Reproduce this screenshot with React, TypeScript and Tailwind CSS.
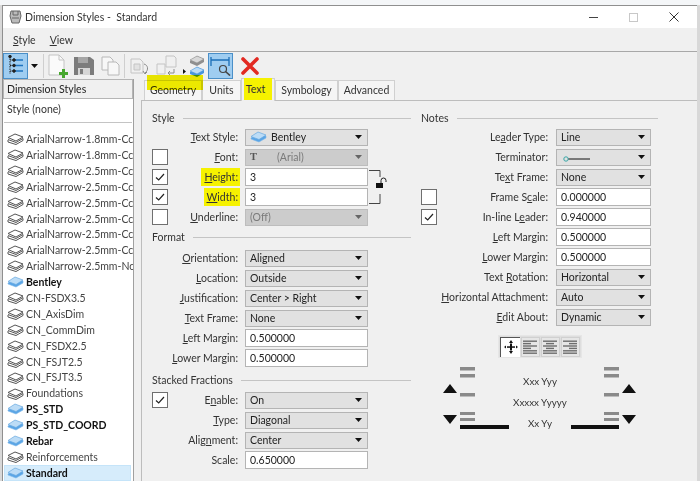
import React from "react";

function Tri({ color = "#111" }: { color?: string }) {
  return (
    <svg width="7" height="4" viewBox="0 0 7 4" className="shrink-0">
      <path d="M0 0h7L3.5 4z" fill={color} />
    </svg>
  );
}

function Lbl({ t, u }: { t: string; u?: number }) {
  if (u === undefined) return <>{t}</>;
  return (
    <>
      {t.slice(0, u)}
      <span className="underline">{t[u]}</span>
      {t.slice(u + 1)}
    </>
  );
}

function Sheet({ blue }: { blue?: boolean }) {
  if (blue) {
    return (
      <svg width="17" height="12" viewBox="0 0 17 12" className="shrink-0">
        <path d="M1 7l7-5 8 3v2l-7 4-8-3z" fill="#5aa5e6" stroke="#7fb8ea" strokeWidth=".6" />
        <path d="M1 5.5L8 1l8 3-7 4.5z" fill="#bcdcf6" stroke="#69a9e0" strokeWidth=".7" />
      </svg>
    );
  }
  return (
    <svg width="17" height="12" viewBox="0 0 17 12" className="shrink-0" fill="#fff" stroke="#555" strokeWidth="1">
      <path d="M1 7v2l8 2.5 7-4V5.5" fill="none" />
      <path d="M1 4.5L8 1l8 3-7 4z" />
      <path d="M1 6.5L9 9.5l7-4" fill="none" />
    </svg>
  );
}

function Check({ on }: { on?: boolean }) {
  return (
    <div className="flex h-4 w-4 shrink-0 items-center justify-center border border-[#6f6f6f] bg-white">
      {on && (
        <svg width="10" height="8" viewBox="0 0 10 8">
          <path d="M1 4.5L3.7 7 9 1" fill="none" stroke="#222" strokeWidth="1.200" />
        </svg>
      )}
    </div>
  );
}

function Combo({ v, off, icon }: { v: React.ReactNode; off?: boolean; icon?: React.ReactNode }) {
  return (
    <div
      className={`flex h-[17px] w-full items-center border pl-[4px] pr-[5px] ${
        off ? "border-[#bdbdbd] bg-[#cccccc] text-[#7a7a7a]" : "border-[#b4b4b4] bg-[#e1e1e1] text-[#222]"
      }`}
    >
      {icon}
      <div className="min-w-0 flex-1 truncate leading-[15px]">{v}</div>
      <Tri color={off ? "#666" : "#111"} />
    </div>
  );
}

function Edit({ v }: { v: string }) {
  return (
    <div className="flex h-[18px] w-full items-center border border-[#b4b4b4] bg-white pl-[4px] text-[#222]">{v}</div>
  );
}

function Row({
  label,
  u,
  check,
  mark,
  right,
  children,
}: {
  label: string;
  u?: number;
  check?: "on" | "off";
  mark?: boolean;
  right?: boolean;
  children: React.ReactNode;
}) {
  return (
    <div className="flex h-5 items-center">
      <div className="w-4 shrink-0">{check && <Check on={check === "on"} />}</div>
      <div className={`shrink-0 whitespace-nowrap text-right text-[#333] ${right ? "w-[111px]" : "w-[70px]"}`}>
        <span className={mark ? "-mr-[2px] bg-[#f6f200] py-[3px] pl-[3px] pr-[2px]" : ""}>
          <Lbl t={label} u={u} />:
        </span>
      </div>
      <div className={`shrink-0 ${right ? "ml-2 w-[95px]" : "ml-[7px] w-[123px]"}`}>{children}</div>
    </div>
  );
}

function Head({ t, className = "" }: { t: string; className?: string }) {
  return (
    <div className={`flex items-center gap-2 text-[#333] ${className}`}>
      <span className="shrink-0">{t}</span>
      <div className="h-px flex-1 bg-[#c4c4c4]" />
    </div>
  );
}

function AlignBtn({ rows }: { rows: [number, number][] }) {
  return (
    <div className="flex h-[20px] w-[19px] items-center justify-center border border-[#d0d0d0] bg-[#e6e6e6]">
      <svg width="15" height="14" viewBox="0 0 15 14">
        {rows.map(([x, w], i) => (
          <rect key={i} x={x} y={i * 2.4 + .5} width={w} height="1.4" fill="#6d6d6d" />
        ))}
      </svg>
    </div>
  );
}

function Toolbar() {
  return (
    <div className="flex h-[27px] items-center">
      <div className="flex h-[26px] w-[25px] items-center justify-center border border-[#4a8fc8] bg-[#9fcdf1]">
        <svg width="17" height="21" viewBox="0 0 17 21" fill="none" stroke="#222" strokeWidth="1">
          <path d="M3 1v18M3 5h5M3 10.500h5M3 16h5" strokeDasharray="1.500 1" />
          <path d="M8 5h8M8 10.500h8M8 16h8" stroke="#1f74c0" strokeWidth="1.600" />
          <circle cx="3" cy="1.500" r="1.300" fill="#222" />
          <circle cx="7" cy="5" r="1.300" fill="#222" />
          <circle cx="7" cy="10.500" r="1.300" fill="#222" />
          <circle cx="7" cy="16" r="1.300" fill="#222" />
        </svg>
      </div>
      <div className="ml-[3px] w-[9px]">
        <Tri />
      </div>
      <div className="ml-[3px] h-[24px] w-px bg-[#cfcfcf]" />
      <svg width="22" height="24" viewBox="0 0 22 24" className="ml-[3px]">
        <path d="M2 1h10l5 5v15H2z" fill="#fafafa" stroke="#c4c4c4" />
        <path d="M12 1v5h5" fill="none" stroke="#c4c4c4" />
        <path d="M15 15h3v3h3v3h-3v3h-3v-3h-3v-3h3z" fill="#47a72f" />
      </svg>
      <svg width="20" height="20" viewBox="0 0 20 20" className="ml-[5px]">
        <path d="M0 1h16l4 3v15H0z" fill="#7c7c7c" />
        <path d="M4 1h10v6H4z" fill="#a6a6a6" />
        <path d="M4 12h12v7H4z" fill="#d6d6d6" />
        <path d="M6 13h3v5H6z" fill="#7c7c7c" />
      </svg>
      <svg width="20" height="20" viewBox="0 0 20 20" className="ml-[7px]" fill="#f7f7f7" stroke="#b8b8b8">
        <path d="M1 1h8l3 3v10H1z" />
        <path d="M7 6h8l3 3v10H7z" />
      </svg>
      <div className="ml-[3px] h-[24px] w-px bg-[#cfcfcf]" />
      <svg width="21" height="20" viewBox="0 0 21 20" className="ml-[5px]" fill="#f0f0f0" stroke="#c4c4c4">
        <path d="M1 3h9l3 3v11H1z" />
        <path d="M4 8h6v6H4z" fill="#e2e2e2" />
        <path d="M14 8c4 1 5 6 1 9M13 15l2 3 2-2" fill="none" stroke="#8a8a8a" />
      </svg>
      <svg width="22" height="22" viewBox="0 0 22 22" className="ml-[4px]" fill="#f0f0f0" stroke="#c4c4c4">
        <path d="M11 1h8l2 2v9H11z" />
        <path d="M2 9h8v10H2z" />
        <path d="M19 14v4h-6M15 16l-2 2 2 2" fill="none" stroke="#8a8a8a" />
      </svg>
      <svg width="22" height="24" viewBox="0 0 22 24" className="ml-[6px]">
        <path d="M0 15l3 2.500L0 20z" fill="#111" />
        <path d="M7 7l7-5 7 3v3l-7 4-7-3z" fill="#8f8f8f" />
        <path d="M7 6l7-4 7 3-7 4z" fill="#d8d8d8" stroke="#8a8a8a" strokeWidth=".6" />
        <path d="M7 18l7-5 7 3v3l-7 4-7-3z" fill="#4a95db" />
        <path d="M7 17l7-4 7 3-7 4z" fill="#bcdcf6" stroke="#4a95db" strokeWidth=".6" />
      </svg>
      <div className="ml-[3px] flex h-[26px] w-[25px] items-center justify-center border border-[#4a8fc8] bg-[#9fcdf1]">
        <svg width="21" height="21" viewBox="0 0 21 21" fill="none">
          <path d="M1 2v9M19 2v9M1 5h18" stroke="#1c6fb8" strokeWidth="1.300" />
          <circle cx="13" cy="14" r="3.500" stroke="#444" strokeWidth="1.200" />
          <path d="M15.500 16.500L20 20.500" stroke="#444" strokeWidth="1.600" />
        </svg>
      </div>
      <svg width="18" height="18" viewBox="0 0 18 18" className="ml-[8px]">
        <path d="M2 2l14 14M16 2L2 16" stroke="#e22a22" strokeWidth="3.600" strokeLinecap="round" />
      </svg>
    </div>
  );
}

const greys = [
  "ArialNarrow-1.8mm-Cc",
  "ArialNarrow-1.8mm-Cc",
  "ArialNarrow-2.5mm-Cc",
  "ArialNarrow-2.5mm-Cc",
  "ArialNarrow-2.5mm-Cc",
  "ArialNarrow-2.5mm-Cc",
  "ArialNarrow-2.5mm-Cc",
  "ArialNarrow-2.5mm-Cc",
  "ArialNarrow-2.5mm-Nc",
];
const items: [string, boolean][] = [
  ...greys.map((g) => [g, false] as [string, boolean]),
  ["Bentley", true],
  ["CN-FSDX3.5", false],
  ["CN_AxisDim", false],
  ["CN_CommDim", false],
  ["CN_FSDX2.5", false],
  ["CN_FSJT2.5", false],
  ["CN_FSJT3.5", false],
  ["Foundations", false],
  ["PS_STD", true],
  ["PS_STD_COORD", true],
  ["Rebar", true],
  ["Reinforcements", false],
  ["Standard", true],
];

function ListPanel() {
  return (
    <div className="flex h-full w-[131px] shrink-0 flex-col overflow-hidden border-r border-[#a0a0a0]">
      <div className="flex h-[21px] items-center border border-[#b5b5b5] bg-[#f0f0f0] pl-[3px] text-[#222]">
        Dimension Styles
      </div>
      <div className="flex-1 bg-white">
        <div className="flex h-[15px] items-center pl-[4px] pt-[4px] text-[#333]">Style (none)</div>
        <div className="mx-[1px] mt-[8px] h-px bg-[#c4c4c4]" />
        <div className="pt-[8px]">
          {items.map(([name, bold], i) => (
            <div
              key={i}
              className={`flex h-[15.9px] items-center gap-[2px] whitespace-nowrap ${
                name === "Standard" ? "ml-[1px] mr-[2px] border border-[#c5e4f9] bg-[#d6ecfb] pl-[2px]" : "pl-[4px]"
              } ${bold ? "font-bold text-[#111]" : "text-[#444]"}`}
            >
              <Sheet blue={bold} />
              {name}
            </div>
          ))}
        </div>
      </div>
    </div>
  );
}

function Preview() {
  const bars = (x: number) => (
    <g fill="#8a8a8a">
      <rect x={x} y="49" width="15" height="3.500" />
      <rect x={x} y="56" width="15" height="3.500" />
      <rect x={x} y="75" width="15" height="3.500" />
      <rect x={x} y="94" width="15" height="3" />
      <rect x={x} y="100" width="15" height="3" />
    </g>
  );
  return (
    <svg width="240" height="92" viewBox="0 44 240 92" className="ml-[9px] mt-[4px] block">
      {bars(30)}
      {bars(174)}
      <path d="M13 75h14l-7-9zM13 97h14l-7 9zM192 75h14l-7-9zM192 97h14l-7 9z" fill="#111" />
      <rect x="30" y="107" width="49" height="4" fill="#111" />
      <rect x="141" y="107" width="48" height="4" fill="#111" />
      <g fontFamily="Lato, sans-serif" fontSize="9.800" fill="#333" textAnchor="middle">
        <text x="110" y="67">Xxx Yyy</text>
        <text x="110" y="88">Xxxxx Yyyyy</text>
        <text x="110" y="109">Xx Yy</text>
      </g>
    </svg>
  );
}

function TabPanel() {
  const tabs = [
    ["Geometry", "w-[58px]"],
    ["Units", "w-[39px]"],
    ["Text", "w-[34px]"],
    ["Symbology", "w-[63px]"],
    ["Advanced", "w-[57px]"],
  ];
  return (
    <div className="ml-[7px] flex min-w-0 flex-1 flex-col">
      <div className="flex h-[21px] items-end pl-[3px]">
        {tabs.map(([t, w]) => (
          <div
            key={t}
            className={`flex items-center justify-center border border-b-0 border-[#d0d0d0] text-[#333] ${w} ${
              t === "Text" ? "relative z-10 -mb-px h-[23px] bg-[#f0f0f0]" : "h-[20px] bg-[#f5f5f5]"
            }`}
          >
            <span className={t === "Text" ? "-translate-y-[1px] bg-[#f6f200] py-[6px] pl-[2px] pr-[7px]" : ""}>{t}</span>
          </div>
        ))}
      </div>
      <div className="flex flex-1 gap-[10px] border-l border-t border-[#bdbdbd] bg-[#f0f0f0] pl-[10px] pt-[8px]">
        <div className="w-[259px] shrink-0">
          <Head t="Style" className="h-[18px]" />
          <Row label="Text Style" u={0}>
            <Combo v="Bentley" icon={<span className="mr-[4px]"><Sheet blue /></span>} />
          </Row>
          <Row label="Font" u={0} check="off">
            <Combo
              off
              v={<span className="ml-[20px]">(Arial)</span>}
              icon={<span className="font-['Liberation_Serif'] font-bold text-[#555]">T</span>}
            />
          </Row>
          <div className="relative">
            <Row label="Height" u={0} check="on" mark>
              <Edit v="3" />
            </Row>
            <Row label="Width" u={0} check="on" mark>
              <Edit v="3" />
            </Row>
            <svg width="20" height="36" viewBox="0 0 20 36" className="absolute left-[217px] top-[3px]" fill="none">
              <path d="M0 .500h11V7M0 33.500h11V24" stroke="#444" />
              <rect x="7" y="13" width="7" height="5" fill="#111" />
              <path d="M12 13v-2.500a2.500 2.500 0 0 1 5 0V12" stroke="#222" />
            </svg>
          </div>
          <Row label="Underline" u={0} check="off">
            <Combo off v="(Off)" />
          </Row>
          <Head t="Format" className="h-[21px]" />
          <Row label="Orientation" u={0}><Combo v="Aligned" /></Row>
          <Row label="Location" u={0}><Combo v="Outside" /></Row>
          <Row label="Justification" u={0}><Combo v="Center > Right" /></Row>
          <Row label="Text Frame" u={0}><Combo v="None" /></Row>
          <Row label="Left Margin" u={0}><Edit v="0.500000" /></Row>
          <Row label="Lower Margin" u={0}><Edit v="0.500000" /></Row>
          <Head t="Stacked Fractions" className="mt-[3px] h-[19px]" />
          <Row label="Enable" u={1} check="on"><Combo v="On" /></Row>
          <Row label="Type" u={0}><Combo v="Diagonal" /></Row>
          <Row label="Alignment" u={4}><Combo v="Center" /></Row>
          <Row label="Scale"><Edit v="0.650000" /></Row>
        </div>
        <div className="w-[237px] shrink-0">
          <Head t="Notes" className="h-[18px]" />
          <Row right label="Leader Type" u={2}><Combo v="Line" /></Row>
          <Row right label="Terminator">
            <Combo
              v={
                <svg width="30" height="8" viewBox="0 0 30 8" className="ml-[1px] mt-[3px] block">
                  <path d="M5 4h23" stroke="#111" strokeWidth="1" />
                  <circle cx="4" cy="4" r="2.200" fill="#e1e1e1" stroke="#39a7a7" />
                </svg>
              }
            />
          </Row>
          <Row right label="Text Frame" u={2}><Combo v="None" /></Row>
          <Row right label="Frame Scale" u={7} check="off"><Edit v="0.000000" /></Row>
          <Row right label="In-line Leader" u={9} check="on"><Edit v="0.940000" /></Row>
          <Row right label="Left Margin" u={0}><Edit v="0.500000" /></Row>
          <Row right label="Lower Margin" u={0}><Edit v="0.500000" /></Row>
          <Row right label="Text Rotation" u={5}><Combo v="Horizontal" /></Row>
          <Row right label="Horizontal Attachment" u={0}><Combo v="Auto" /></Row>
          <Row right label="Edit About" u={0}><Combo v="Dynamic" /></Row>
          <div className="ml-[77px] mt-[8px] flex h-[23px] w-[84px] items-center gap-px border border-[#e6e6e6] bg-[#dedede] px-[1px]">
            <div className="flex h-[20px] w-[20px] items-center justify-center border-l border-t border-[#555] bg-white">
              <svg width="14" height="14" viewBox="0 0 14 14">
                <path d="M6 3.500h2v7H6zM7 0l2 3H5zM7 14l-2-3h4zM0 7l2-1.500v3zM14 7l-2-1.500v3z" fill="#111" />
                <rect x="3" y="6.300" width="8" height="1.500" fill="#111" />
              </svg>
            </div>
            <AlignBtn rows={[[0, 14], [0, 8], [0, 14], [0, 8], [0, 14], [0, 14]]} />
            <AlignBtn rows={[[0, 14], [3, 8], [0, 14], [3, 8], [0, 14], [0, 14]]} />
            <AlignBtn rows={[[0, 14], [6, 8], [0, 14], [6, 8], [0, 14], [0, 14]]} />
          </div>
          <Preview />
        </div>
      </div>
    </div>
  );
}

export default function App() {
  return (
    <div className="relative h-[481px] w-[700px] overflow-hidden bg-[#d8d8d8] pl-[2px] pr-[3px] pt-[5px] font-['Lato',sans-serif] text-[10.5px] leading-none blur-[0.3px]">
      <div className="absolute left-0 top-0 h-[5px] w-full bg-[#f4f6f8]" />
      <div className="relative flex h-[476px] flex-col border-l border-t border-[#8f8f8f] bg-[#f0f0f0]">
        <div className="flex h-[22px] shrink-0 items-center bg-white pl-[6px] text-[#333]">
          <svg width="13" height="14" viewBox="0 0 13 14" fill="#bbb" stroke="#666">
            <path d="M2 1h9l1 5-2 7H3L1 6z" />
            <path d="M4 1v4h5V1M3 8h7" fill="none" />
          </svg>
          <span className="ml-[3px] whitespace-pre">Dimension Styles -  Standard</span>
          <div className="ml-auto flex items-center pr-[18px]">
            <div className="h-px w-[9px] bg-[#444]" />
            <div className="ml-[31px] h-[9px] w-[9px] border border-[#c8c8c8]" />
            <svg width="10" height="10" viewBox="0 0 10 10" className="ml-[31px]">
              <path d="M.5.500l9 9M9.500.500l-9 9" stroke="#333" />
            </svg>
          </div>
        </div>
        <div className="flex h-[24px] shrink-0 items-center gap-[14px] border-b border-[#a8a8a8] bg-[#f0f0f0] pl-[10px] pt-[1px] text-[#333]">
          <span><Lbl t="Style" u={0} /></span>
          <span><Lbl t="View" u={0} /></span>
        </div>
        <Toolbar />
        <div className="flex min-h-0 flex-1">
          <ListPanel />
          <TabPanel />
        </div>
        <div className="pointer-events-none absolute left-[144px] top-[69px] h-[15px] w-[56px] bg-[#f6f200] mix-blend-multiply" />
      </div>
    </div>
  );
}
